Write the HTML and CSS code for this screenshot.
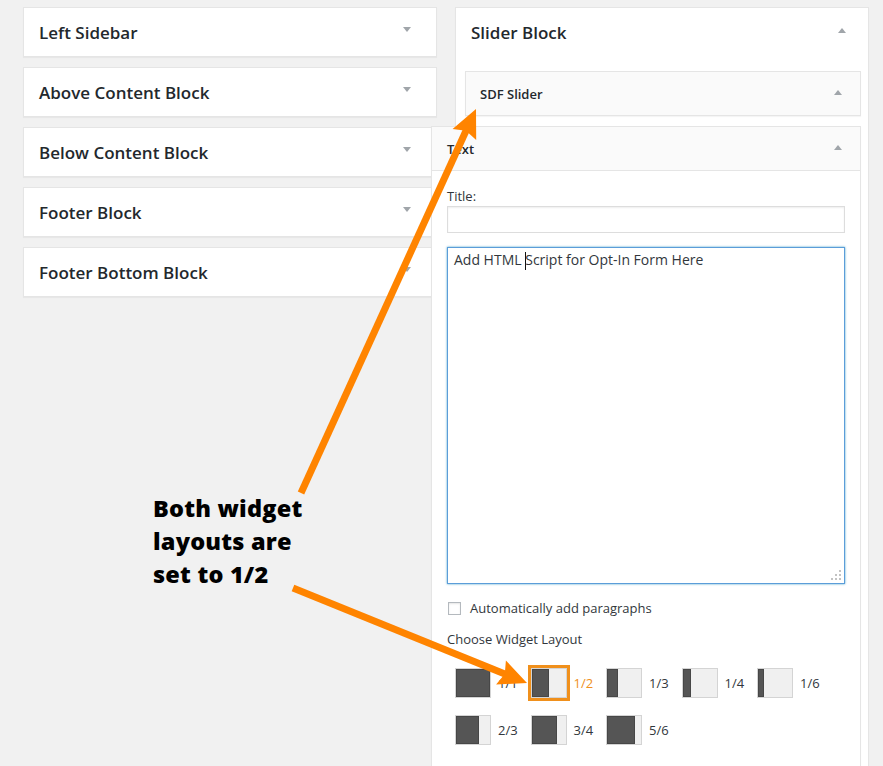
FILE: index.html
```html
<!DOCTYPE html>
<html>
<head>
<meta charset="utf-8">
<link rel="stylesheet" href="styles.css">
</head>
<body>
<div class="page">
  <div class="col col-left">
    <div class="sidebar-box"><h2>Left Sidebar</h2><span class="tri-down"></span></div>
    <div class="sidebar-box"><h2>Above Content Block</h2><span class="tri-down"></span></div>
    <div class="sidebar-box"><h2>Below Content Block</h2><span class="tri-down"></span></div>
    <div class="sidebar-box"><h2>Footer Block</h2><span class="tri-down"></span></div>
    <div class="sidebar-box"><h2>Footer Bottom Block</h2><span class="tri-down"></span></div>
  </div>
  <div class="col col-right">
    <div class="slider-box">
      <div class="slider-head"><h2>Slider Block</h2><span class="tri-up"></span></div>
      <div class="widgets">
        <div class="widget">
          <div class="widget-top"><h3>SDF Slider</h3><span class="tri-up"></span></div>
        </div>
        <div class="widget widget-open">
          <div class="widget-top widget-top-open"><h3>Text</h3><span class="tri-up"></span></div>
          <div class="widget-inside">
            <label class="field-label">Title:</label>
            <div class="input"></div>
            <div class="textarea">Add HTML <span class="caret"></span>Script for Opt-In Form Here
              <svg class="grip" width="12" height="12" viewBox="0 0 12 12">
                <rect x="9" y="0" width="2" height="2" fill="#c3c3c3"/>
                <rect x="5" y="4" width="2" height="2" fill="#c3c3c3"/>
                <rect x="9" y="4" width="2" height="2" fill="#c3c3c3"/>
                <rect x="1" y="8" width="2" height="2" fill="#c3c3c3"/>
                <rect x="5" y="8" width="2" height="2" fill="#c3c3c3"/>
                <rect x="9" y="8" width="2" height="2" fill="#c3c3c3"/>
              </svg>
            </div>
            <div class="check-row"><span class="checkbox"></span><span>Automatically add paragraphs</span></div>
            <div class="choose">Choose Widget Layout</div>
            <div class="layouts">
              <div class="layout"><span class="frame"><span class="thumb"><span class="fill" style="width:100%"></span></span></span><span class="lbl">1/1</span></div>
              <div class="layout selected"><span class="frame"><span class="thumb"><span class="fill" style="width:50%"></span></span></span><span class="lbl">1/2</span></div>
              <div class="layout"><span class="frame"><span class="thumb"><span class="fill" style="width:33.33%"></span></span></span><span class="lbl">1/3</span></div>
              <div class="layout"><span class="frame"><span class="thumb"><span class="fill" style="width:25%"></span></span></span><span class="lbl">1/4</span></div>
              <div class="layout"><span class="frame"><span class="thumb"><span class="fill" style="width:16.67%"></span></span></span><span class="lbl">1/6</span></div>
              <div class="layout"><span class="frame"><span class="thumb"><span class="fill" style="width:66.67%"></span></span></span><span class="lbl">2/3</span></div>
              <div class="layout"><span class="frame"><span class="thumb"><span class="fill" style="width:75%"></span></span></span><span class="lbl">3/4</span></div>
              <div class="layout"><span class="frame"><span class="thumb"><span class="fill" style="width:83.33%"></span></span></span><span class="lbl">5/6</span></div>
            </div>
          </div>
        </div>
      </div>
    </div>
  </div>
</div>

<div class="note">Both widget<br>layouts are<br>set to 1/2</div>

<svg class="arrows" width="883" height="766" viewBox="0 0 883 766">
  <line x1="301" y1="493" x2="466.6" y2="129.5" stroke="#ff8400" stroke-width="7"/>
  <polygon points="476,109 476.2,139.9 466,130.8 452.6,129.1" fill="#ff8400"/>
  <line x1="293" y1="588" x2="505.5" y2="674.3" stroke="#ff8400" stroke-width="7"/>
  <polygon points="527,683 496.1,684.5 504.8,674 505.9,660.4" fill="#ff8400"/>
</svg>
</body>
</html>
```

FILE: styles.css
```css
html, body {
  margin: 0;
  padding: 0;
}
body {
  background: #f1f1f1;
  font-family: "Open Sans", "Liberation Sans", sans-serif;
  color: #23282d;
  width: 883px;
  height: 766px;
  overflow: hidden;
  position: relative;
}
.page {
  display: flex;
  gap: 18px;
  padding: 7px 0 0 23px;
}
.col {
  width: 414px;
  flex: none;
}
.sidebar-box {
  box-sizing: border-box;
  height: 50px;
  margin-bottom: 10px;
  background: #fff;
  border: 1px solid #e5e5e5;
  box-shadow: 0 1px 1px rgba(0,0,0,.04);
  display: flex;
  align-items: center;
  justify-content: space-between;
  padding: 2px 25px 0 15px;
}
.sidebar-box h2,
.slider-head h2 {
  margin: 0;
  font-size: 17px;
  font-weight: 600;
  line-height: 22px;
}
.tri-down {
  width: 0;
  height: 0;
  border-left: 4px solid transparent;
  border-right: 4px solid transparent;
  border-top: 5px solid #a0a5aa;
  margin-bottom: 8px;
}
.tri-up {
  width: 0;
  height: 0;
  border-left: 4px solid transparent;
  border-right: 4px solid transparent;
  border-bottom: 5px solid #a0a5aa;
}
.slider-box {
  background: #fff;
  border: 1px solid #e5e5e5;
  box-shadow: 0 1px 1px rgba(0,0,0,.04);
  height: 820px;
}
.slider-head {
  display: flex;
  align-items: center;
  justify-content: space-between;
  padding: 14px 22px 0 15px;
}
.slider-head .tri-up {
  margin-bottom: 6px;
}
.widgets {
  padding: 27px 7px 0 9px;
}
.widget {
  background: #fafafa;
  border: 1px solid #e5e5e5;
  box-shadow: 0 1px 1px rgba(0,0,0,.04);
}
.widget + .widget {
  margin-top: 10px;
}
.widget-open {
  margin-left: -34px;
}
.widget-top {
  height: 43px;
  display: flex;
  align-items: center;
  justify-content: space-between;
  padding: 0 18px 0 14px;
}
.widget-top .tri-up {
  margin-bottom: 2px;
}
.widget-top-open {
  padding-left: 15px;
  border-bottom: 1px solid #e5e5e5;
}
.widget-top h3 {
  margin: 0;
  font-size: 13px;
  font-weight: 600;
  line-height: 20px;
}
.widget-inside {
  background: #fff;
  padding: 15px 15px 30px;
  font-size: 13px;
  color: #32373c;
}
.field-label {
  display: block;
  line-height: 20px;
}
.input {
  box-sizing: border-box;
  height: 27px;
  border: 1px solid #ddd;
  box-shadow: inset 0 1px 2px rgba(0,0,0,.07);
  margin-bottom: 14px;
}
.textarea {
  box-sizing: border-box;
  position: relative;
  height: 337px;
  border: 1px solid #5b9dd9;
  box-shadow: 0 0 2px rgba(30,140,190,.8);
  padding: 2px 6px;
  font-size: 14px;
  line-height: 20px;
  color: #32373c;
  margin-bottom: 14px;
}
.caret {
  display: inline-block;
  width: 0;
  height: 18px;
  border-left: 1px solid #111;
  margin-right: -1px;
  vertical-align: -5px;
}
.grip {
  position: absolute;
  right: 2px;
  bottom: 1px;
}
.check-row {
  display: flex;
  align-items: center;
  gap: 9px;
  line-height: 20px;
}
.checkbox {
  box-sizing: border-box;
  width: 13px;
  height: 13px;
  margin-left: 1px;
  border: 1px solid #b4b9be;
  background: #fff;
  box-shadow: inset 0 1px 2px rgba(0,0,0,.1);
}
.choose {
  margin-top: 11px;
  line-height: 20px;
}
.layouts {
  margin: 16px 0 0 5px;
  display: grid;
  grid-template-columns: repeat(5, 75.5px);
  row-gap: 11px;
}
.layout {
  display: flex;
  align-items: center;
  gap: 4px;
}
.frame {
  box-sizing: border-box;
  width: 42px;
  height: 36px;
  border: 3px solid transparent;
}
.selected .frame {
  border-color: #f0901c;
}
.thumb {
  box-sizing: border-box;
  display: flex;
  width: 36px;
  height: 30px;
  border: 1px solid #d4d4d4;
  background: #f0f0f0;
}
.fill {
  height: 100%;
  background: #555;
  box-shadow: inset 0 0 0 1px #474747;
}
.lbl {
  font-size: 13px;
  color: #32373c;
}
.selected .lbl {
  color: #f0901c;
}
.note {
  position: absolute;
  left: 153px;
  top: 492px;
  font-family: "Open Sans", "Liberation Sans", sans-serif;
  font-weight: 800;
  font-size: 23.5px;
  line-height: 33px;
  letter-spacing: 0.2px;
  color: #000;
}
.arrows {
  position: absolute;
  left: 0;
  top: 0;
  pointer-events: none;
}
```
